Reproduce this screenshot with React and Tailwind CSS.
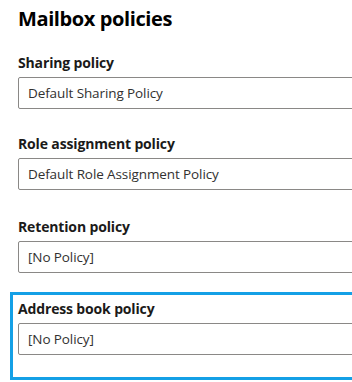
import React from 'react';

function Field({ label, value, className = '' }) {
  return (
    <div className={className}>
      <div className="text-[14px] leading-[20px] font-bold tracking-[-0.15px] text-[#1b1a19]">{label}</div>
      <div className="mt-[4px] h-[32px] w-[360px] rounded-[2px] border border-[#8a8886] flex items-center pl-[9px] text-[13.5px] tracking-[-0.1px] text-[#323130]">
        {value}
      </div>
    </div>
  );
}

export default function App() {
  return (
    <div className="w-[352px] h-[382px] overflow-hidden bg-white [font-family:'Open_Sans',sans-serif]">
      <h1 className="pl-[18px] pt-[5px] text-[20px] leading-[28px] font-bold tracking-[-0.4px] text-black">Mailbox policies</h1>

      <div className="pl-[18px]">
        <Field label="Sharing policy" value="Default Sharing Policy" className="mt-[20px]" />
        <Field label="Role assignment policy" value="Default Role Assignment Policy" className="mt-[25px]" />
        <Field label="Retention policy" value="[No Policy]" className="mt-[27px]" />
      </div>

      <div className="mt-[19px] ml-[10px] w-[360px] border-[3px] border-[#14a0e6] pl-[5px] pt-[4px] pb-[22px]">
        <Field label="Address book policy" value="[No Policy]" />
      </div>
    </div>
  );
}
